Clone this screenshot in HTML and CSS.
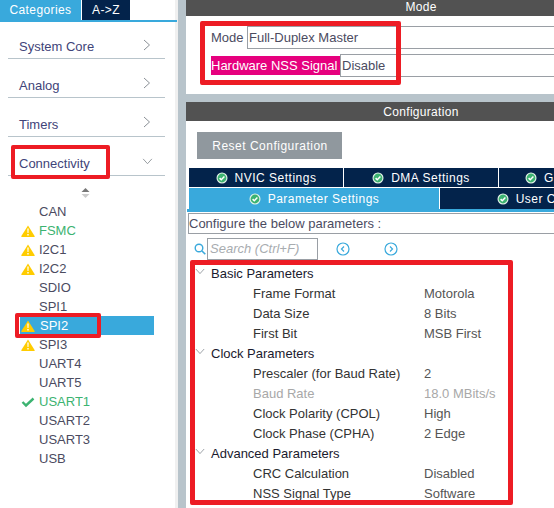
FILE: index.html
```html
<!DOCTYPE html>
<html>
  <head>
    <title>SPI2 Mode and Configuration</title>
    <link rel="stylesheet" href="styles.css">
  </head>
  <body>
    <svg class="defs" width="0" height="0">
      <symbol id="warn" viewBox="0 0 14 12">
        <path d="M7 .5 13.6 11a.6.6 0 0 1-.5.9H.9a.6.6 0 0 1-.5-.9z" fill="#ffcc00"/>
        <path d="M6.3 3.5h1.4l-.2 4.6h-1zM6.3 9h1.4v1.4H6.3z" fill="#fff"/>
      </symbol>
      <symbol id="ok" viewBox="0 0 12 12">
        <circle cx="6" cy="6" r="5.5" fill="#e4f3ea"/>
        <circle cx="6" cy="6" r="4.4" fill="#3cb371"/>
        <path d="M3.6 6.1 5.3 7.8 8.4 4.6" fill="none" stroke="#fff" stroke-width="1.5"/>
      </symbol>
      <symbol id="right" viewBox="0 0 8 12">
        <path d="M1 1 6.5 6 1 11" fill="none" stroke="#8a9096" stroke-width="1"/>
      </symbol>
      <symbol id="down" viewBox="0 0 12 8">
        <path d="M1 1 6 6.5 11 1" fill="none" stroke="#8a9096" stroke-width="1"/>
      </symbol>
    </svg>

    <div class="app">
      <aside class="sidebar">
        <div class="cat-tabs">
          <div class="cat-tab active">Categories</div>
          <div class="cat-tab">A-&gt;Z</div>
        </div>
        <div class="cat-head">System Core <svg class="chev"><use href="#right"/></svg></div>
        <div class="cat-head">Analog <svg class="chev"><use href="#right"/></svg></div>
        <div class="cat-head">Timers <svg class="chev"><use href="#right"/></svg></div>
        <div class="cat-head">Connectivity <svg class="chev-down"><use href="#down"/></svg></div>
        <div class="sort">
          <svg width="9" height="10" viewBox="0 0 9 10">
            <path d="M4.5 0 8.5 4H.5z" fill="#777"/>
            <path d="M.5 6h8l-4 4z" fill="#ccc"/>
          </svg>
        </div>
        <ul class="ip-list">
          <li>CAN</li>
          <li class="green"><svg class="ip-icon"><use href="#warn"/></svg>FSMC</li>
          <li><svg class="ip-icon"><use href="#warn"/></svg>I2C1</li>
          <li><svg class="ip-icon"><use href="#warn"/></svg>I2C2</li>
          <li>SDIO</li>
          <li>SPI1</li>
          <li class="selected"><svg class="ip-icon"><use href="#warn"/></svg>SPI2</li>
          <li><svg class="ip-icon"><use href="#warn"/></svg>SPI3</li>
          <li>UART4</li>
          <li>UART5</li>
          <li class="green"><svg class="ip-icon" viewBox="0 0 14 12"><path d="M1.5 6 5 9.5 12.5 2.5" fill="none" stroke="#3cb371" stroke-width="2.4"/></svg>USART1</li>
          <li>USART2</li>
          <li>USART3</li>
          <li>USB</li>
        </ul>
      </aside>

      <main class="main">
        <div class="bar mode-bar">Mode</div>
        <section class="mode">
          <div class="mode-row first">
            <label class="mode-label">Mode</label>
            <div class="field">Full-Duplex Master</div>
          </div>
          <div class="mode-row">
            <label class="mode-label pink">Hardware NSS Signal</label>
            <div class="field">Disable</div>
          </div>
        </section>

        <div class="bar config-bar">Configuration</div>
        <section class="config">
          <button class="reset">Reset Configuration</button>
          <div class="tabs three">
            <div class="tab"><svg class="ok"><use href="#ok"/></svg>NVIC Settings</div>
            <div class="tab"><svg class="ok"><use href="#ok"/></svg>DMA Settings</div>
            <div class="tab"><svg class="ok"><use href="#ok"/></svg>GPIO Settings</div>
          </div>
          <div class="tabs two">
            <div class="tab active"><svg class="ok"><use href="#ok"/></svg>Parameter Settings</div>
            <div class="tab"><svg class="ok"><use href="#ok"/></svg>User Constants</div>
          </div>
          <div class="tab-line"></div>
          <div class="hint">Configure the below parameters :</div>
          <div class="search">
            <svg class="search-icon" width="12" height="12" viewBox="0 0 12 12">
              <circle cx="5" cy="5" r="3.8" fill="none" stroke="#39a9dc" stroke-width="1.4"/>
              <path d="M8 8 11.3 11.3" stroke="#39a9dc" stroke-width="1.6"/>
            </svg>
            <div class="search-box">Search (Ctrl+F)</div>
            <svg class="nav prev" width="14" height="14" viewBox="0 0 14 14">
              <circle cx="7" cy="7" r="6" fill="none" stroke="#39a9dc" stroke-width="1.2"/>
              <path d="M8 4.5 5.5 7 8 9.5" fill="none" stroke="#39a9dc" stroke-width="1.2"/>
            </svg>
            <svg class="nav next" width="14" height="14" viewBox="0 0 14 14">
              <circle cx="7" cy="7" r="6" fill="none" stroke="#39a9dc" stroke-width="1.2"/>
              <path d="M6 4.5 8.5 7 6 9.5" fill="none" stroke="#39a9dc" stroke-width="1.2"/>
            </svg>
          </div>
          <div class="tree">
            <div class="group"><svg class="twist"><use href="#down"/></svg>Basic Parameters</div>
            <div class="param"><span class="name">Frame Format</span><span class="value">Motorola</span></div>
            <div class="param"><span class="name">Data Size</span><span class="value">8 Bits</span></div>
            <div class="param"><span class="name">First Bit</span><span class="value">MSB First</span></div>
            <div class="group"><svg class="twist"><use href="#down"/></svg>Clock Parameters</div>
            <div class="param"><span class="name">Prescaler (for Baud Rate)</span><span class="value">2</span></div>
            <div class="param off"><span class="name">Baud Rate</span><span class="value">18.0 MBits/s</span></div>
            <div class="param"><span class="name">Clock Polarity (CPOL)</span><span class="value">High</span></div>
            <div class="param"><span class="name">Clock Phase (CPHA)</span><span class="value">2 Edge</span></div>
            <div class="group"><svg class="twist"><use href="#down"/></svg>Advanced Parameters</div>
            <div class="param"><span class="name">CRC Calculation</span><span class="value">Disabled</span></div>
            <div class="param"><span class="name">NSS Signal Type</span><span class="value">Software</span></div>
          </div>
        </section>
      </main>

      <div class="mark mark-conn"></div>
      <div class="mark mark-spi"></div>
      <div class="mark mark-mode"></div>
      <div class="mark mark-tree"></div>
    </div>
  </body>
</html>
```

FILE: styles.css
```css
body {
  margin: 0;
  font-family: "Liberation Sans", Arial, sans-serif;
  font-size: 13px;
  background: #fff;
  overflow: hidden;
}
.defs {
  position: absolute;
}
.app {
  position: relative;
  display: flex;
  width: 554px;
  height: 508px;
  overflow: hidden;
  background: #b8c4cb;
}

/* left column */
.sidebar {
  flex: none;
  width: 175px;
  margin-right: 11px;
  background: #fff;
  box-shadow: 3px 0 0 #f0f0f0;
}
.cat-tabs {
  display: flex;
  height: 20px;
  border-bottom: 2px solid #39a9dc;
  width: 177px;
}
.cat-tab {
  width: 48px;
  line-height: 20px;
  font-size: 12px;
  letter-spacing: .4px;
  text-align: center;
  color: #fff;
  background: #03234b;
}
.cat-tab.active {
  width: 81px;
  margin-right: 1px;
  background: #39a9dc;
}
.cat-head {
  position: relative;
  height: 38px;
  line-height: 54px;
  margin: 0 10px 0 8px;
  padding-left: 11px;
  border-bottom: 1px solid #b8c4cb;
  color: #3f4479;
}
.cat-tabs + .cat-head {
  height: 36px;
  line-height: 50px;
}
.chev {
  position: absolute;
  left: 135px;
  top: 18px;
  width: 8px;
  height: 12px;
}
.cat-tabs + .cat-head .chev {
  top: 17px;
}
.chev-down {
  position: absolute;
  left: 134px;
  top: 21px;
  width: 11px;
  height: 7px;
}
.sort {
  display: flex;
  justify-content: center;
  height: 26px;
  padding-top: 12px;
  box-sizing: border-box;
  width: 171px;
}
.ip-list {
  list-style: none;
  margin: 0 0 0 20px;
  padding: 0;
  width: 134px;
}
.ip-list li {
  position: relative;
  height: 19px;
  line-height: 19px;
  padding-left: 19px;
  color: #4b4b5f;
}
.ip-list .green {
  color: #3cb371;
}
.ip-list .selected {
  background: #39a9dc;
  color: #fff;
  padding-left: 20px;
}
.ip-icon {
  position: absolute;
  left: 1px;
  top: 4px;
  width: 14px;
  height: 12px;
}

/* right column */
.main {
  flex: none;
  width: 470px;
}
.bar {
  text-align: center;
  color: #fff;
  background: #525252;
  font-size: 12px;
  letter-spacing: .3px;
}
.mode-bar {
  height: 16px;
  line-height: 14px;
}
.config-bar {
  height: 19px;
  line-height: 20px;
}
.mode {
  height: 78px;
  margin-bottom: 8px;
  background: #fff;
  box-sizing: border-box;
  padding: 10px 0 0 25px;
}
.mode-row {
  display: flex;
  height: 23px;
  line-height: 21px;
  margin-bottom: 5px;
}
.mode-row.first .mode-label {
  width: 36px;
  color: #4b4b5f;
}
.mode-label {
  flex: none;
  align-self: center;
}
.mode-label.pink {
  width: 129px;
  height: 19px;
  line-height: 19px;
  background: #e6007e;
  color: #fff;
  white-space: nowrap;
}
.field {
  flex: 1;
  border: 1px solid #9a9fa5;
  border-right: 0;
  padding-left: 1px;
  color: #4b4b5f;
}
.config {
  height: 387px;
  background: #fff;
  padding-top: 11px;
  box-sizing: border-box;
}
.reset {
  display: block;
  width: 145px;
  height: 27px;
  margin: 0 0 9px 11px;
  padding: 0 0 0 1px;
  border: 0;
  background: #90989e;
  color: #fff;
  font-family: inherit;
  font-size: 12px;
  letter-spacing: .5px;
}
.tabs {
  display: flex;
  margin-left: 3px;
  gap: 1px;
}
.tabs.three {
  height: 19px;
  margin-bottom: 1px;
}
.tabs.three .tab {
  width: 154px;
  padding-top: 1px;
  box-sizing: border-box;
}
.tabs.two {
  height: 21px;
}
.tabs.two .tab {
  width: 222px;
}
.tabs.two .tab.active {
  width: 250px;
}
.tab {
  flex: none;
  display: flex;
  align-items: center;
  justify-content: center;
  color: #fff;
  background: #03234b;
  font-size: 12px;
  letter-spacing: .5px;
  white-space: nowrap;
}
.tab.active {
  background: #39a9dc;
}
.ok {
  flex: none;
  width: 12px;
  height: 12px;
  margin-right: 7px;
}
.tab-line {
  height: 3px;
  margin-left: 1px;
  background: #39a9dc;
}
.hint {
  height: 19px;
  line-height: 19px;
  margin: 1px 0 0 2px;
  border: 1px solid #9a9fa5;
  border-right: 0;
  color: #4b4b5f;
}
.search {
  position: relative;
  height: 22px;
  margin: 4px 0 0 8px;
  display: flex;
  align-items: center;
}
.search-icon {
  margin-right: 1px;
}
.search-box {
  width: 107px;
  height: 20px;
  line-height: 20px;
  padding-left: 2px;
  border: 1px solid #9a9fa5;
  font-style: italic;
  color: #a8acb0;
}
.nav.prev {
  margin-left: 18px;
}
.nav.next {
  margin-left: 34px;
}
.tree {
  margin: 4px 0 0 14px;
}
.group, .param {
  display: flex;
  height: 20px;
  line-height: 20px;
  color: #1a1a2e;
  white-space: nowrap;
}
.group {
  position: relative;
  padding-left: 11px;
}
.twist {
  position: absolute;
  left: -5px;
  top: 4px;
  width: 10px;
  height: 7px;
}
.name {
  width: 171px;
  margin-left: 53px;
  color: #333;
}
.value {
  color: #555;
}
.off .name, .off .value {
  color: #a8a8a8;
}

/* red call-outs drawn on top of the shot */
.mark {
  position: absolute;
  box-sizing: border-box;
  border: 4px solid #ed1c24;
  border-radius: 2px;
}
.mark-conn {
  left: 11px;
  top: 145px;
  width: 99px;
  height: 34px;
}
.mark-spi {
  left: 15px;
  top: 313px;
  width: 86px;
  height: 25px;
}
.mark-mode {
  left: 200px;
  top: 21px;
  width: 201px;
  height: 64px;
  border-width: 5px;
}
.mark-tree {
  left: 190px;
  top: 260px;
  width: 323px;
  height: 245px;
  border-width: 5px;
}
```
